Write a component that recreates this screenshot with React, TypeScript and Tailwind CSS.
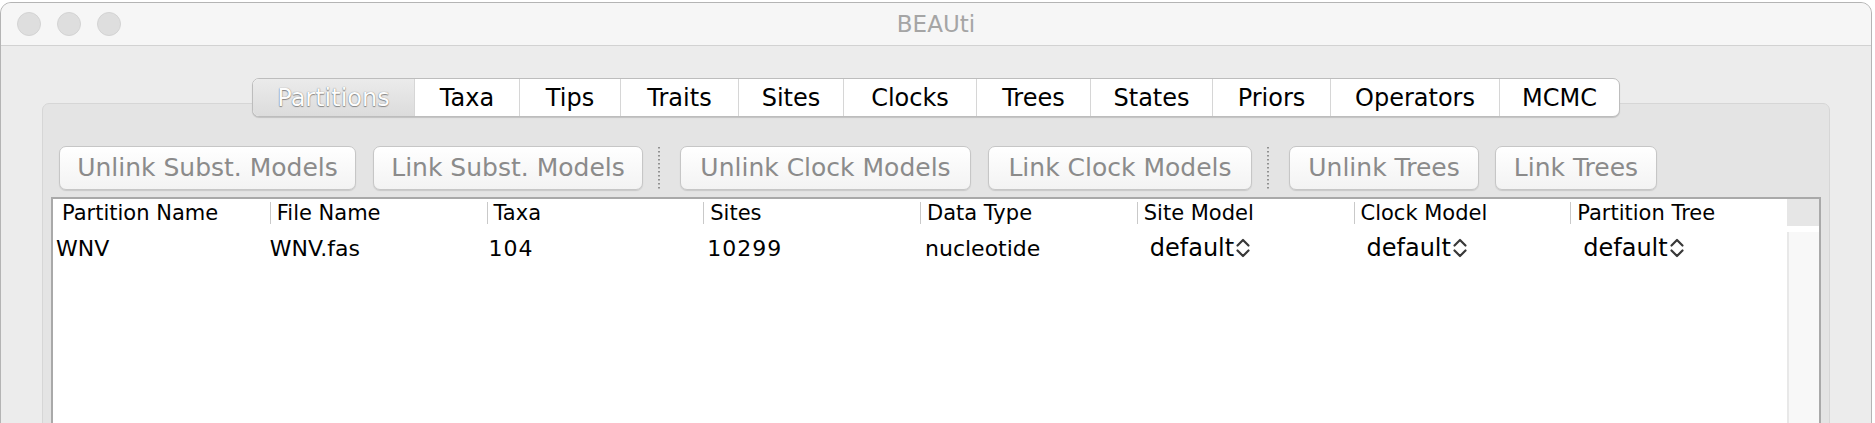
import React from "react";

type Tab = { label: string; width: string };

const tabs: Tab[] = [
  { label: "Partitions", width: "w-[161px]" },
  { label: "Taxa", width: "w-[105px]" },
  { label: "Tips", width: "w-[101px]" },
  { label: "Traits", width: "w-[118px]" },
  { label: "Sites", width: "w-[105px]" },
  { label: "Clocks", width: "w-[133px]" },
  { label: "Trees", width: "w-[114px]" },
  { label: "States", width: "w-[122px]" },
  { label: "Priors", width: "w-[118px]" },
  { label: "Operators", width: "w-[169px]" },
  { label: "MCMC", width: "w-[120px]" },
];

const headers = [
  "Partition Name",
  "File Name",
  "Taxa",
  "Sites",
  "Data Type",
  "Site Model",
  "Clock Model",
  "Partition Tree",
];

const UpDown = () => (
  <svg width="16" height="22" viewBox="0 0 16 22" className="ml-[1px] shrink-0">
    <polyline points="2.5,8.5 8,3 13.5,8.5" fill="none" stroke="#383838" strokeWidth="2.2" strokeLinecap="round" strokeLinejoin="round" />
    <polyline points="2.5,13.5 8,19 13.5,13.5" fill="none" stroke="#383838" strokeWidth="2.2" strokeLinecap="round" strokeLinejoin="round" />
  </svg>
);

const Separator = () => (
  <svg width="2" height="44" className="ml-[15px] mr-[20px] shrink-0">
    <line x1="1" y1="1" x2="1" y2="44" stroke="#7c7c7c" strokeWidth="1.6" strokeDasharray="1.6 2.4" />
  </svg>
);

const Button = ({ label, width }: { label: string; width: string }) => (
  <div
    className={`${width} h-[44px] shrink-0 flex items-center justify-center rounded-[7px] border border-[#c6c6c6] bg-gradient-to-b from-white to-[#f3f3f3] shadow-[0_1px_1px_rgba(0,0,0,0.12)] text-[25px] text-[#8b8b8b]`}
  >
    {label}
  </div>
);

const Combo = ({ value }: { value: string }) => (
  <div className="flex items-center pl-[13px] text-[24px] text-black">
    {value}
    <UpDown />
  </div>
);

const App = () => {
  return (
    <div className="h-[423px] w-[1875px] overflow-hidden bg-white pt-[2px] font-['DejaVu_Sans',sans-serif]">
      <div className="h-[520px] w-[1872px] flex flex-col rounded-t-[11px] border border-[#b4b4b4] bg-[#ececec] overflow-hidden">
        {/* Title bar */}
        <div className="h-[43px] shrink-0 grid grid-cols-[1fr_auto_1fr] items-center border-b border-[#d2d2d2] bg-[#f6f6f6]">
          <div className="flex items-center gap-[16px] pl-[16px]">
            <span className="h-[24px] w-[24px] rounded-full border border-[#d3d3d3] bg-[#dedede]" />
            <span className="h-[24px] w-[24px] rounded-full border border-[#d3d3d3] bg-[#dedede]" />
            <span className="h-[24px] w-[24px] rounded-full border border-[#d3d3d3] bg-[#dedede]" />
          </div>
          <div className="text-[23px] text-[#a5a5a5]">BEAUti</div>
          <div />
        </div>

        {/* Body */}
        <div className="flex-1 flex flex-col px-[41px] pt-[32px]">
          {/* Tabs */}
          <div className="relative z-10 flex justify-center">
            <div className="flex h-[39px] rounded-[7px] border border-[#bdbdbd] bg-white shadow-[0_1px_1px_rgba(0,0,0,0.15)] overflow-hidden">
              {tabs.map((tab, i) =>
                i === 0 ? (
                  <div
                    key={tab.label}
                    className={`${tab.width} flex items-center justify-center bg-gradient-to-b from-[#ebebeb] to-[#dcdcdc] text-[24px] text-[#fdfdfd] [text-shadow:0_0_1px_#6f6f6f,0_1px_1px_#8a8a8a]`}
                  >
                    {tab.label}
                  </div>
                ) : (
                  <div
                    key={tab.label}
                    className={`${tab.width} flex items-center justify-center border-l border-[#d6d6d6] text-[24px] text-black`}
                  >
                    {tab.label}
                  </div>
                )
              )}
            </div>
          </div>

          {/* Panel */}
          <div className="-mt-[14px] h-[420px] flex flex-col rounded-[7px] border border-[#d6d6d6] bg-[#e4e4e4] px-[8px] pt-[42px]">
            {/* Buttons row */}
            <div className="flex items-center pl-[8px]">
              <Button label="Unlink Subst. Models" width="w-[297px]" />
              <div className="w-[17px]" />
              <Button label="Link Subst. Models" width="w-[270px]" />
              <Separator />
              <Button label="Unlink Clock Models" width="w-[291px]" />
              <div className="w-[17px]" />
              <Button label="Link Clock Models" width="w-[264px]" />
              <Separator />
              <Button label="Unlink Trees" width="w-[190px]" />
              <div className="w-[16px]" />
              <Button label="Link Trees" width="w-[162px]" />
            </div>

            {/* Table */}
            <div className="mt-[7px] flex-1 border-2 border-[#a9a9a9] bg-white">
              <div className="grid h-[27px] grid-cols-[repeat(8,minmax(0,1fr))_32px] items-center">
                {headers.map((h, i) => (
                  <div
                    key={h}
                    className={
                      i === 0
                        ? "flex h-[22px] items-center pl-[9px] pt-[2px] text-[21px] text-black"
                        : "flex h-[22px] items-center border-l border-[#c9c9c9] pl-[6px] pt-[2px] text-[21px] text-black"
                    }
                  >
                    {h}
                  </div>
                ))}
                <div className="h-[27px] bg-[#e6e6e6]" />
              </div>

              <div className="grid grid-cols-[repeat(8,minmax(0,1fr))_32px]">
                <div className="flex h-[44px] items-center pl-[3px] text-[22px] text-black">WNV</div>
                <div className="flex h-[44px] items-center text-[22px] text-black">WNV.fas</div>
                <div className="flex h-[44px] items-center pl-[2px] text-[22px] tracking-[1px] text-black">104</div>
                <div className="flex h-[44px] items-center pl-[4px] text-[22px] tracking-[1px] text-black">10299</div>
                <div className="flex h-[44px] items-center pl-[5px] text-[22px] text-black">nucleotide</div>
                <div className="flex h-[44px] items-center">
                  <Combo value="default" />
                </div>
                <div className="flex h-[44px] items-center">
                  <Combo value="default" />
                </div>
                <div className="flex h-[44px] items-center">
                  <Combo value="default" />
                </div>
                <div className="row-span-2 mt-[6px] h-[400px] border-l-2 border-[#e8e8e8] bg-[#f8f8f8]" />
              </div>
            </div>
          </div>
        </div>
      </div>
    </div>
  );
};

export default App;
